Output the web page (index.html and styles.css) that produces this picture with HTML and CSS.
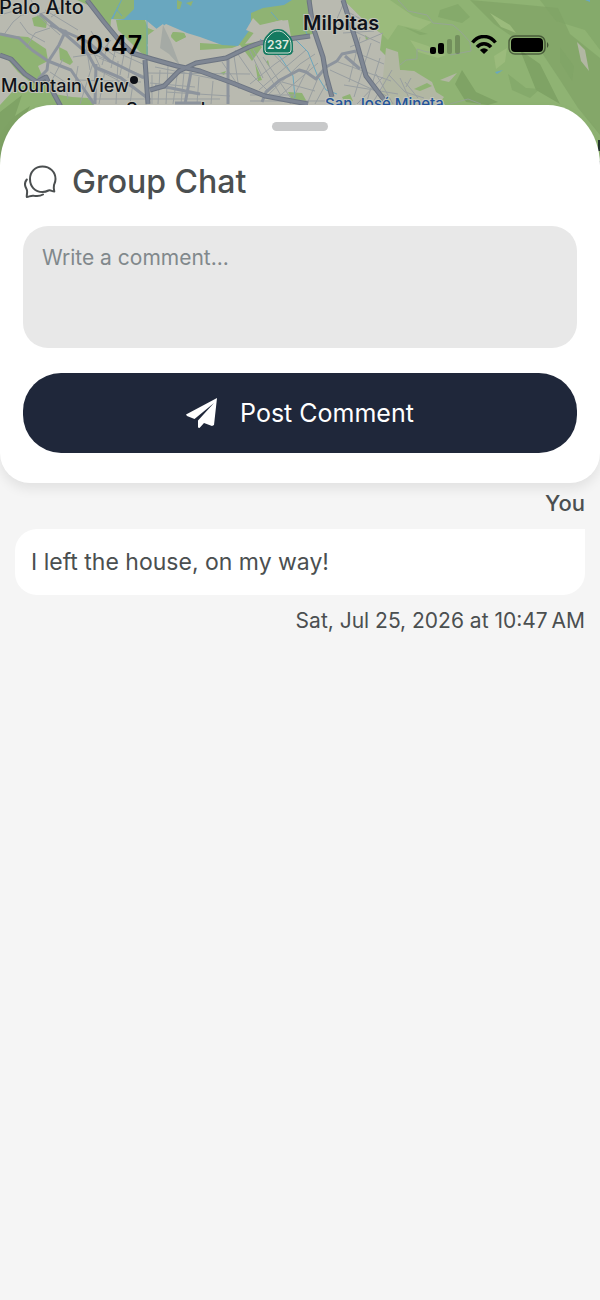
FILE: index.html
```html
<!DOCTYPE html>
<html lang="en">
<head>
  <meta charset="UTF-8" />
  <meta name="viewport" content="width=device-width, initial-scale=1" />
  <title>Group Chat</title>
  <link rel="stylesheet" href="styles.css">
</head>
<body>

<!-- map behind the sheet -->
<svg class="map" viewBox="0 0 600 200" preserveAspectRatio="xMidYMin slice" aria-hidden="true">
  <rect width="600" height="200" fill="#b9bab0" />

  <!-- hills and parks -->
  <g fill="#8fb373">
    <path d="M0 33 L14 36 L28 37 L46 49 L48 61 L38 66 L44 80 L30 82 L18 72 L8 60 L0 57Z" />
    <path d="M0 105 L12 92 L26 84 L42 76 L54 94 L72 97 L88 98 L95 106 L95 200 L0 200Z" />
    <path d="M32 18 L40 15 L47 22 L46 28 L34 26Z" />
    <path d="M59 47 L67 51 L73 62 L70 65 L60 60Z" />
    <path d="M77 0 H122 L111 20 L110 32 L106 24 L90 6Z" />
    <path d="M116 20 L145 20 L148 28 L158 32 L147 45 L152 54 L146 56 L140 52 L118 30Z" />
    <path d="M173 32 L184 33 L186 37 L176 42 L170 37Z" />
    <path d="M245 0 H312 L310 12 L315 33 L306 36 L291 37 L288 20 L278 21 L264 25 L256 30 L245 44 L256 42 L262 47 L252 61 L240 45 L232 48 L200 50 L200 43 L232 45Z" />
    <path d="M255 63 L262 80 L258 81Z M288 92 L302 93 L307 102 L294 104Z" />
    <path d="M344 0 H600 V200 H436 L445 105 L438 94 L428 88 L418 84 L416 72 L400 70 L380 50 L382 34 L366 22Z" />
    <path d="M266 62 l4 6 l-2 -8z M365 35 l4 3 l-3 2z M390 65 l3 5 l-4 -2z M342 97 l8 -3 l3 7 l-8 2z M220 73 l6 -2 l-2 4z" />
  </g>
  <g fill="#7fa365">
    <path d="M0 112 L22 95 L15 116 L30 106 L18 132 L8 137 L0 164Z" />
    <path d="M470 0 L494 24 L514 38 L536 44 L560 80 L578 108 L600 135 V58 L570 34 L558 8 L516 4Z" opacity=".7" />
    <path d="M462 70 L476 92 L498 102 L488 105 L466 102 L455 84Z M520 50 L540 64 L560 104 L536 90Z" />
    <path d="M440 10 L458 4 L470 17 L462 23 L438 17Z M404 27 L428 34 L420 35Z M540 0 L556 21 L585 30 L600 50 V0Z" opacity=".6" />
    <path d="M508 74 l18 14 l14 1 l-10 9 l-18 -8z M560 47 l14 19 l-2 15 l-12 -19z" opacity=".6" />
  </g>
  <g fill="#9bbb7c">
    <path d="M344 0 H390 L413 16 L432 22 L420 30 L398 25 L388 40 L382 34 L366 22Z" />
    <path d="M494 56 L507 48 L505 62 L496 69Z M410 40 L428 46 L446 55 L438 58 L418 52Z M490 13 l20 12 l6 8 l-15 -6z" />
  </g>
  <path d="M386 48 L398 52 L400 70 L414 71 L432 82 L436 92 L444 97 L438 105 H380Z M440 80 L457 73 L449 82Z M577 42 L585 50 L589 71 L581 61Z" fill="#b2b7a3" />
  <path d="M414 89 L427 83 L432 86 L420 91Z" fill="#8fb373" />

  <!-- bay -->
  <g fill="#69a7bf">
    <path d="M121 0 H292 L284 5 L263 8 L251 13 L251 28 L238 46 L222 45 L200 37 L187 33 L166 24 L158 30 L146 20 L124 20 L111 19Z" />
    <path d="M274 0 h17 l-9 4z M495 72 l8 -2 l-6 4z M585 0 h5 v2z" />
  </g>
  <path d="M122 0 L113 19 L124 19 L128 15 L134 9 L134 0Z" fill="#8fb373" />
  <g fill="none" stroke="#69a7bf" stroke-width="1">
    <path d="M147 14 V55 M117 10 L122 16 M271 12 L278 20 M260 39 L281 58 L293 76 L295 98 M296 40 L308 52 L318 77 L326 90 L337 94 M304 28 L309 38" />
  </g>
  <path d="M148 35 L163 24 L174 40 L191 57 L214 53 L214 65 L191 72 L160 58 L148 57Z" fill="#b9bab0" />
  <path d="M163 25 L171 42 L180 66 L169 54 L160 48Z" fill="#a5aaa5" />
  <path d="M173 32 L184 33 L186 37 L176 42 L171 37Z" fill="#8fb373" />
  <path d="M253 18 L260 25 L282 20 L288 27 L285 40 L260 39 L256 34 L246 30Z" fill="#b9bab0" />
  <path d="M177 0 l5 2 l-2 7 h-3z M186 3 l7 -2 l-2 5z" fill="#8fb373" />

  <!-- local streets -->
  <g fill="none" stroke="#999fa1" stroke-width="1">
    <path d="M0 15 L14 11 L23 15 L32 10 L45 22 L60 35 M3 36 L13 22 L25 12 M20 22 L28 33 L45 42 M8 0 L17 10 M31 0 L39 14 L60 8 M45 10 L78 30 M51 17 L61 11 M26 48 L35 33 L50 28 M60 28 L90 45 L100 67" />
    <path d="M50 72 L65 82 L68 99 M63 59 L51 82 M78 66 L74 90 M85 39 L90 70 M93 63 L80 104 M105 70 L99 104 M118 61 L116 104 M133 83 L130 104 M73 57 L93 54 L108 60 L142 78 M78 80 L141 82 M88 99 H220" />
    <path d="M85 50 L101 52 L111 40 M91 31 L100 45 L116 57 M109 40 L102 65 M117 43 L111 68 M125 49 L120 75 M132 54 L128 78 M105 47 L145 65 M99 58 L144 76 M94 68 L139 91" />
    <path d="M152 75 V104 M160 70 L158 104 M168 66 L166 104 M177 76 L173 104 M184 72 L181 104 M199 77 L197 104 M213 81 L211 104 M222 62 L240 88 M234 56 L239 89 M146 73 L250 74 M155 67 L230 82 M166 92 L230 96 M150 83 L195 87" />
    <path d="M235 50 L253 76 L269 92 M247 45 L263 78 M253 49 L280 94 M263 57 L294 103 M270 50 L293 75 M250 84 L275 64 L294 51 M259 90 L287 66 L306 50 M265 98 L300 64 L315 54 M275 100 L318 63 M282 82 L315 91 M310 64 L290 104 M320 73 L307 104 M328 80 L315 104" />
    <path d="M250 95 H295 M250 101 H325 M345 0 L336 21 L323 28 M350 13 L373 26 M338 24 L380 43 M343 33 L374 31 M350 47 L383 33 M354 52 L384 64 M360 37 L349 82 M371 43 L354 97 M380 58 L367 101 M392 70 L372 104 M330 70 L389 97 M338 62 L391 81 M344 85 L398 94 M376 74 L393 104 M357 104 L383 77" />
    <path d="M400 78 L409 98 M405 82 L418 98 M389 75 L405 92 L424 98 M411 78 L406 87" />
    <path d="M398 0 L408 11 L427 15 L433 23 L453 25 L461 32 L470 42 L471 51 L450 55 M400 65 L406 60 L417 59 L417 49 L427 52 L444 52 M450 104 L468 99 L481 104" opacity=".7" />
  </g>
  <!-- arterials -->
  <g fill="none" stroke="#8d949d" stroke-width="3" stroke-linejoin="round">
    <path d="M40 14 L66 35 L88 54 L95 67 L121 78 L150 100 M66 30 L59 45 L48 62 L47 70 L38 79 M0 34 L19 38 L32 50 L48 61 L71 70 L94 104 M96 64 L95 104 M50 25 L88 42 L110 61 L144 78 M175 103 H204 M191 72 L185 104" />
    <path d="M228 59 V104 M262 102 L266 92 L280 80 L299 70 L306 72 L316 79 L326 67 L337 61 L342 54 L356 51 M345 56 L360 69 M155 86 L171 88 L200 94" />
  </g>
  <!-- freeways, dark casing then lighter fill -->
  <path d="M0 55 L11 59 L25 74 L37 82 L46 77 L54 94 L61 107 M87 0 L104 22 L118 39 L132 53 L152 59 L177 66 L200 71 L230 82 L265 96 L308 104 M145 60 L148 104 M150 90 L164 86 L179 71 L196 63 L226 58 L249 47 L260 43 L310 36 M309 0 L313 27 L323 57 L326 75 L332 97 M343 0 L357 44 L366 76 L385 101" fill="none" stroke="#6d7582" stroke-width="5" stroke-linejoin="round" />
  <path d="M0 55 L11 59 L25 74 L37 82 L46 77 L54 94 L61 107 M87 0 L104 22 L118 39 L132 53 L152 59 L177 66 L200 71 L230 82 L265 96 L308 104 M145 60 L148 104 M150 90 L164 86 L179 71 L196 63 L226 58 L249 47 L260 43 L310 36 M309 0 L313 27 L323 57 L326 75 L332 97 M343 0 L357 44 L366 76 L385 101" fill="none" stroke="#7f8794" stroke-width="3" stroke-linejoin="round" />

  <!-- route shield -->
  <path d="M278 29 C284 29 286 32 289 35 C292 38 293 41 293 45 V50 Q293 55 288 55 H268 Q263 55 263 50 V45 C263 41 264 38 267 35 C270 32 272 29 278 29Z" fill="#147a60" />
  <path d="M278 31 C283 31 285 34 288 37 C290 39 291 42 291 45 V50 Q291 53 288 53 H268 Q265 53 265 50 V45 C265 42 266 39 268 37 C271 34 273 31 278 31Z" fill="none" stroke="#d4ded5" stroke-width="1" />
  <text class="shield-text" x="278" y="49" text-anchor="middle">237</text>

  <circle cx="134" cy="80" r="4" fill="#0c0f16" />
  <g class="map-labels">
    <text x="-1" y="14" class="town">Palo Alto</text>
    <text x="1" y="92">Mountain View</text>
    <text x="303" y="30" class="city">Milpitas</text>
    <text x="126" y="116">Sunnyvale</text>
    <text x="325" y="109" class="airport">San José Mineta</text>
  </g>
  <path d="M598 140 h2 v11 h-2z M598 161 h2 v5 h-2z" fill="#26362f" />
  <path d="M0 168 h3 v32 h-3z" fill="#72a9a6" />
</svg>

<header class="status-bar">
  <time>10:47</time>
  <div class="status-icons">
    <svg width="30" height="20" viewBox="0 0 30 20" aria-hidden="true">
      <rect x="0" y="12" width="6" height="7" rx="2" />
      <rect x="8" y="8" width="6" height="11" rx="2" />
      <rect x="17" y="4" width="5" height="15" rx="2" opacity=".2" />
      <rect x="25" y="0" width="5" height="19" rx="2" opacity=".2" />
    </svg>
    <svg width="26" height="20" viewBox="0 0 26 20" aria-hidden="true">
      <path d="M1.500 7.500 C8 -.5 18 -.5 24.500 7.500 M6 12.200 C10 7.500 16 7.500 20 12.200" fill="none" stroke="#000" stroke-width="3.500" />
      <path d="M13 19 L8.800 15 Q13 11.500 17.200 15Z" />
    </svg>
    <svg width="41" height="20" viewBox="0 0 41 20" aria-hidden="true">
      <rect x="1" y="1" width="36" height="18" rx="6" fill="none" stroke="#000" stroke-opacity=".45" stroke-width="1.500" />
      <rect x="3" y="3" width="32" height="14" rx="4" />
      <path d="M39 7 q3 3 0 6z" opacity=".5" />
    </svg>
  </div>
</header>

<main class="sheet">
  <form class="composer">
    <div class="handle"></div>
    <h1>
      <svg width="34" height="34" viewBox="0 0 34 34" aria-hidden="true">
        <path d="M18.500 1.500 C26 1.500 31.500 7 31.500 14 C31.500 17 30.500 18.500 30 20 C29.600 22 29.600 24 30.300 26.500 C28 26.500 26.500 24.500 24.500 25.500 C22.500 26.500 20.500 27 18.500 27 C11 27 6 21.500 6 14 C6 7 11 1.500 18.500 1.500Z" />
        <path d="M2.800 14.500 C.3 17.500 .7 21 2.500 24 C4 26.500 2.500 29 2.800 32 C5 31.800 7.500 30 10 30.800 C13.500 31.500 16.500 31 19 29.500" />
      </svg>
      Group Chat
    </h1>
    <textarea id="comment" aria-label="Write a comment" placeholder="Write a comment..."></textarea>
    <button type="button">
      <svg width="32" height="32" viewBox="0 0 32 32" aria-hidden="true">
        <path d="M31 1 L0 17.500 L1 19 L8.500 22 L28 6 L12 23.500 V30.500 L13.500 31 L18 26 L26 29 L28 28Z" />
      </svg>
      Post Comment
    </button>
  </form>

  <section class="messages">
    <article class="message">
      <h2>You</h2>
      <p>I left the house, on my way!</p>
      <time>Sat, Jul 25, 2026 at 10:47&#8239;AM</time>
    </article>
  </section>
</main>

</body>
</html>
```
FILE: styles.css
```css
* {
  box-sizing: border-box;
}

body {
  margin: 0;
  min-height: 100vh;
  display: flex;
  flex-direction: column;
  position: relative;
  font-family: Inter, "Liberation Sans", sans-serif;
  background-color: #f5f5f5;
  color: #4b4f50;
}

.map {
  position: absolute;
  top: 0;
  left: 0;
  width: 100%;
  height: 200px;
  z-index: -1;
}

.map-labels text {
  font-size: 18px;
  font-weight: 500;
  fill: #10131a;
  stroke: #c2c4ba;
  stroke-width: 2px;
  paint-order: stroke;
}

.map-labels .town {
  font-size: 20px;
}

.map-labels .city {
  font-size: 20px;
  font-weight: 600;
}

.map-labels .airport {
  font-size: 15px;
  fill: #24549a;
}

.shield-text {
  font-size: 12px;
  font-weight: 600;
  fill: #e2ebe2;
}

.status-bar {
  height: 105px;
  padding: 30px 51px 0 76px;
  display: flex;
  justify-content: space-between;
  align-items: flex-start;
  color: #000;
}

.status-bar time {
  font-size: 25px;
  font-weight: 600;
  line-height: 30px;
}

.status-icons {
  display: flex;
  gap: 11px;
  padding-top: 5px;
}

.sheet {
  flex: 1;
}

.composer {
  display: flex;
  flex-direction: column;
  padding: 17px 23px 30px;
  background-color: #fff;
  border-radius: 52px 52px 30px 30px / 60px 60px 30px 30px;
  box-shadow: 0 6px 12px rgba(0, 0, 0, 0.08);
}

.handle {
  width: 56px;
  height: 9px;
  border-radius: 5px;
  background-color: #c8c9ca;
  align-self: center;
}

h1 {
  display: flex;
  align-items: center;
  gap: 14px;
  margin: 31px 0 24px;
  padding-left: 1px;
  font-size: 32px;
  font-weight: 500;
  line-height: 40px;
}

h1 svg {
  fill: none;
  stroke: #4b4f50;
  stroke-width: 2;
  stroke-linecap: round;
  stroke-linejoin: round;
}

textarea {
  display: block;
  width: 100%;
  height: 122px;
  padding: 19px;
  border: none;
  border-radius: 25px;
  outline: none;
  resize: none;
  background-color: #e8e8e8;
  color: #4b4f50;
  font-family: inherit;
  font-size: 21px;
  line-height: 26px;
}

textarea::placeholder {
  color: #81888c;
  opacity: 1;
}

button {
  display: flex;
  justify-content: center;
  align-items: center;
  gap: 22px;
  height: 80px;
  margin-top: 25px;
  border: none;
  border-radius: 38px;
  background-color: #1f273a;
  color: #fff;
  font-family: inherit;
  font-size: 25px;
  cursor: pointer;
}

button svg {
  fill: #fff;
}

.messages {
  padding: 5px 15px;
}

.message {
  display: flex;
  flex-direction: column;
  align-items: flex-end;
}

.message h2 {
  margin: 0 0 11px;
  font-size: 22px;
  font-weight: 500;
  line-height: 30px;
}

.message p {
  width: 100%;
  margin: 0 0 11px;
  padding: 18px 16px;
  border-radius: 22px 0 22px 22px;
  background-color: #fff;
  font-size: 23px;
  line-height: 30px;
}

.message time {
  font-size: 21px;
  line-height: 30px;
}
```
